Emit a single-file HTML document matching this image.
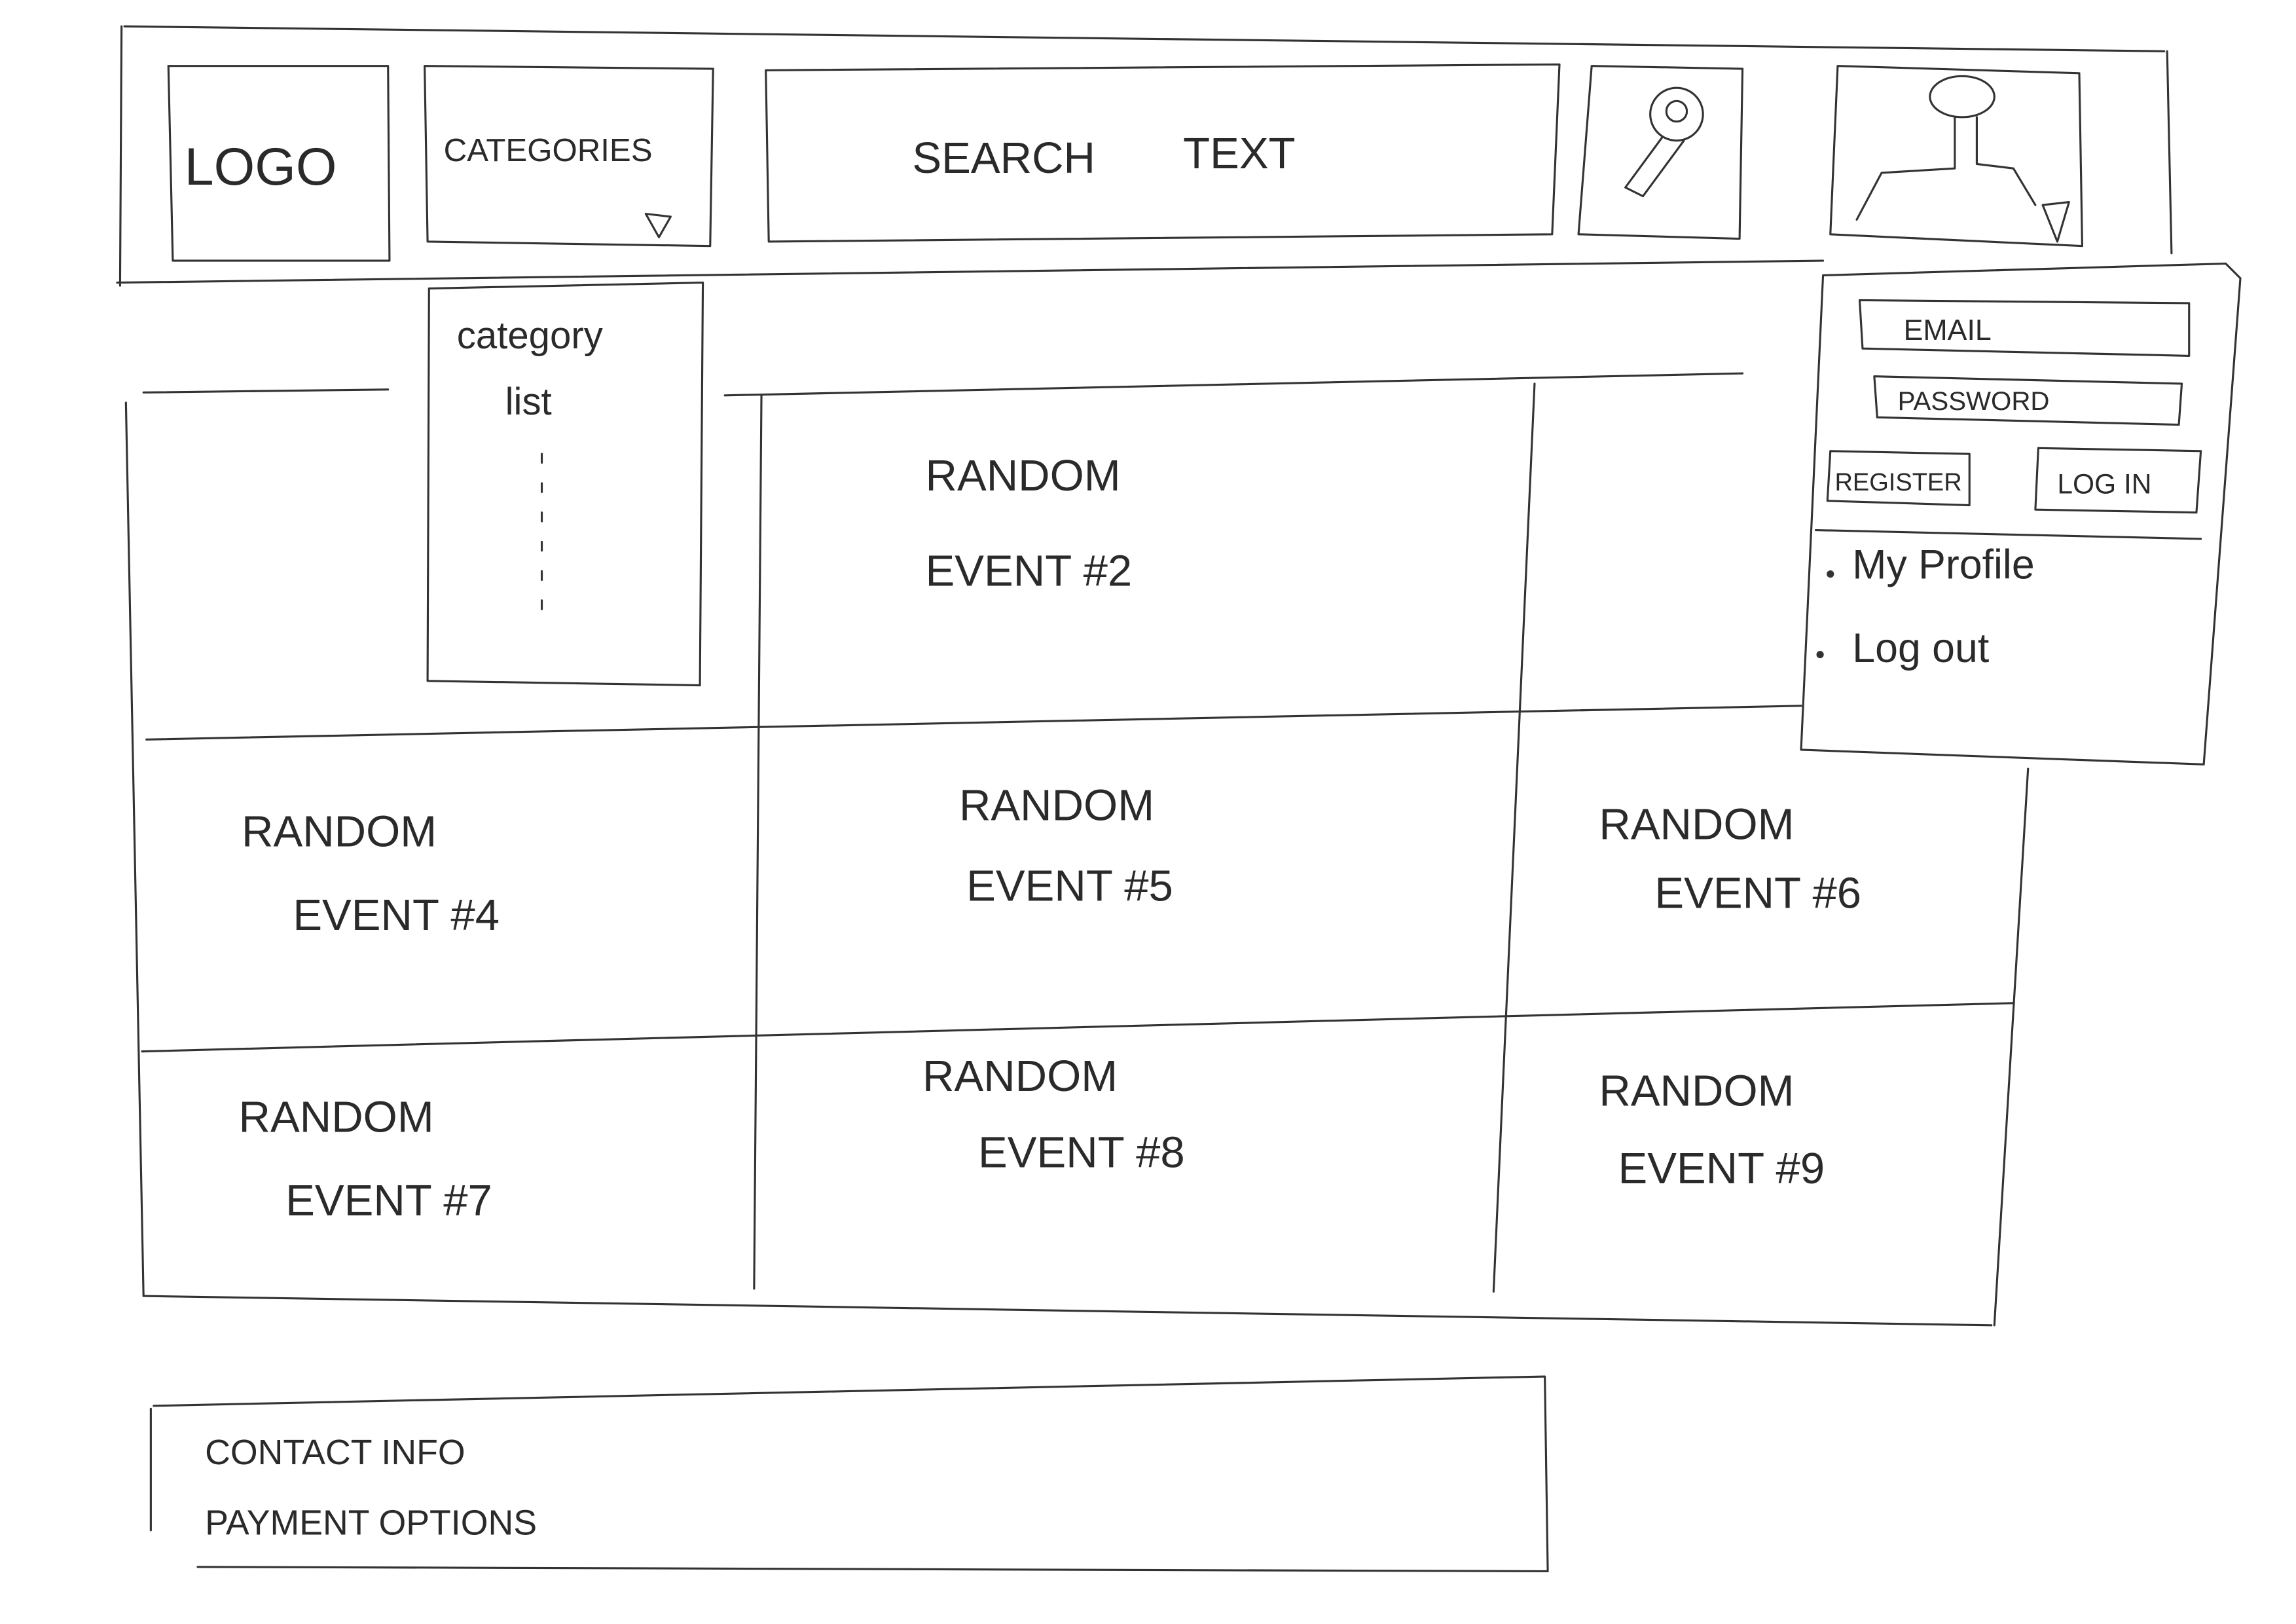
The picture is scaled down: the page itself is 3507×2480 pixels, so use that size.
<!DOCTYPE html>
<html><head><meta charset="utf-8"><style>
html,body{margin:0;padding:0;background:#fff;width:3507px;height:2480px;overflow:hidden}
svg{display:block}
text{font-family:"Liberation Sans",sans-serif;fill:#2a2a2a;font-weight:normal}
</style></head><body>
<svg width="3507" height="2480" viewBox="0 0 1568 1109" preserveAspectRatio="none" xmlns="http://www.w3.org/2000/svg">
<g fill="none" stroke="#333" stroke-width="1.4" stroke-linecap="round" stroke-linejoin="round">
<path d="M85 18 L1478 35 M83 18 L82 195 M80 193 L1245 178 M1480 35 L1483 173"/>
<path d="M115 45 L265 45 L266 178 L118 178 Z"/>
<path d="M290 45 L487 47 L485 168 L292 165 Z"/>
<path d="M441 146 L458 148 L450 162 Z"/>
<path d="M523 48 L1065 44 L1060 160 L525 165 Z"/>
<path d="M1087 45 L1190 47 L1188 163 L1078 160 Z"/>
<circle cx="1145" cy="78" r="18"/><circle cx="1145" cy="76" r="7"/>
<path d="M1135 94 L1110 128 L1122 134 L1150 96"/>
<path d="M1255 45 L1420 50 L1422 168 L1250 160 Z"/>
<ellipse cx="1340" cy="66" rx="22" ry="14"/>
<path d="M1335 80 L1335 115 L1285 118 L1268 150 M1350 80 L1350 112 L1375 115 L1390 140"/>
<path d="M1395 140 L1413 138 L1405 165 Z"/>
<path d="M1245 188 L1520 180 L1530 190 L1505 522 L1230 512 L1245 188"/>
<path d="M1270 205 L1495 207 L1495 243 L1272 238 Z"/>
<path d="M1280 257 L1490 262 L1488 290 L1282 285 Z"/>
<path d="M1250 308 L1345 310 L1345 345 L1248 342 Z"/>
<path d="M1392 306 L1503 308 L1500 350 L1390 348 Z"/>
<path d="M1240 362 L1503 368"/>
<path d="M293 197 L480 193 L478 468 L292 465 Z"/>
<path d="M370 310 L370 420" stroke-dasharray="6 14"/>
<path d="M98 268 L265 266 M495 270 L1190 255"/>
<path d="M86 275 L98 885 M520 270 L515 880 M1048 262 L1020 882 M1385 525 L1362 905"/>
<path d="M100 505 L1230 482 M97 718 L1375 685 M98 885 L1360 905"/>
<path d="M105 960 L1055 940 L1057 1073 M135 1070 L1057 1073 M103 962 L103 1045"/>
</g>
<g fill="#333"><circle cx="1250" cy="392" r="2.5"/><circle cx="1243" cy="447" r="2.5"/></g>
<text x="126" y="126" font-size="36">LOGO</text>
<text x="303" y="110" font-size="22">CATEGORIES</text>
<text x="623" y="118" font-size="30">SEARCH</text>
<text x="808" y="115" font-size="30">TEXT</text>
<text x="1300" y="232" font-size="20">EMAIL</text>
<text x="1296" y="280" font-size="18">PASSWORD</text>
<text x="1253" y="335" font-size="17">REGISTER</text>
<text x="1405" y="337" font-size="19">LOG IN</text>
<text x="1265" y="395" font-size="28">My Profile</text>
<text x="1265" y="452" font-size="28">Log out</text>
<text x="312" y="238" font-size="26">category</text>
<text x="345" y="283" font-size="26">list</text>
<g font-size="30">
<text x="632" y="335">RANDOM</text><text x="632" y="400">EVENT  #2</text>
<text x="165" y="578">RANDOM</text><text x="200" y="635">EVENT  #4</text>
<text x="655" y="560">RANDOM</text><text x="660" y="615">EVENT  #5</text>
<text x="1092" y="573">RANDOM</text><text x="1130" y="620">EVENT  #6</text>
<text x="163" y="773">RANDOM</text><text x="195" y="830">EVENT  #7</text>
<text x="630" y="745">RANDOM</text><text x="668" y="797">EVENT  #8</text>
<text x="1092" y="755">RANDOM</text><text x="1105" y="808">EVENT  #9</text>
</g>
<text x="140" y="1000" font-size="24">CONTACT  INFO</text>
<text x="140" y="1048" font-size="24">PAYMENT  OPTIONS</text>
</svg>
</body></html>
